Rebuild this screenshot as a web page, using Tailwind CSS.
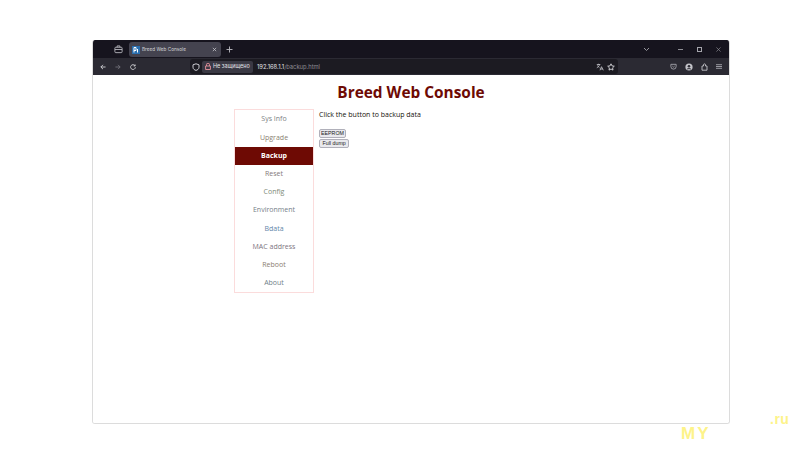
<!DOCTYPE html>
<html>
<head>
<meta charset="utf-8">
<script src="https://cdn.jsdelivr.net/npm/@tailwindcss/browser@4"></script>
</head>
<body class="bg-white w-[800px] h-[450px] overflow-hidden relative font-['Open_Sans',sans-serif]">
<div class="pt-10 pl-[92px]">
  <div class="w-[638px] h-[384px] rounded-[3px] border border-t-0 border-[#dcdcdc] overflow-hidden flex flex-col bg-white">
    <!-- tab strip -->
    <div class="h-[18px] bg-[#16141e] flex items-center text-[#d8d8dc] shrink-0 relative">
      <svg class="ml-[21px] w-[9px] h-[9px]" viewBox="0 0 10 10" fill="none" stroke="#b5b5bc" stroke-width="1"><rect x="1" y="2.5" width="8" height="6" rx="1"/><path d="M3.5 2.5V1h3v1.5M1 5h8"/></svg>
      <div class="ml-[6px] mt-[1px] w-[92px] h-[15px] bg-[#44434f] rounded-[3px] flex items-center pl-[3px] pr-[4px]">
        <svg class="w-[8px] h-[8px] shrink-0" viewBox="0 0 8 8"><rect width="8" height="8" fill="#2a6fb0"/><path d="M2 1.5v5M2 1.5h2v3H2M5.5 3v3.5" stroke="#fff" stroke-width="1" fill="none"/></svg>
        <span class="ml-[2px] text-[4.700px] leading-none font-['Inter',sans-serif] text-[#d5d5da] whitespace-nowrap">Breed Web Console</span>
        <svg class="ml-auto w-[5px] h-[5px]" viewBox="0 0 6 6" stroke="#c9c9cf" stroke-width=".9"><path d="M1 1l4 4M5 1L1 5"/></svg>
      </div>
      <svg class="ml-[5px] w-[7px] h-[7px]" viewBox="0 0 7 7" stroke="#bdbdc4" stroke-width=".9"><path d="M3.5 .5v6M.5 3.5h6"/></svg>
      <svg class="ml-[410px] w-[7px] h-[5px]" viewBox="0 0 7 5" fill="none" stroke="#a5a5ac" stroke-width=".9"><path d="M1 1l2.5 2.5L6 1"/></svg>
      <span class="ml-[28px] w-[5px] h-px bg-[#8f8f96]"></span>
      <span class="ml-[14px] w-[5px] h-[5px] border border-[#a5a5ac]"></span>
      <svg class="ml-[14px] w-[5px] h-[5px]" viewBox="0 0 6 6" stroke="#8f8f96" stroke-width=".8"><path d="M.5.5l5 5M5.5.5l-5 5"/></svg>
    </div>
    <!-- toolbar -->
    <div class="h-[17px] bg-[#2b2a33] flex items-center shrink-0">
      <svg class="ml-[7px] w-[6px] h-[6px] shrink-0" viewBox="0 0 7 7" fill="none" stroke="#d8d8dc" stroke-width="1"><path d="M6.5 3.5H1M3.5 1L1 3.5 3.5 6"/></svg>
      <svg class="ml-[9px] w-[6px] h-[6px] shrink-0" viewBox="0 0 7 7" fill="none" stroke="#75747c" stroke-width="1"><path d="M.5 3.500H6M3.500 1L6 3.500 3.500 6"/></svg>
      <svg class="ml-[9px] w-[6px] h-[6px] shrink-0" viewBox="0 0 7 7" fill="none" stroke="#d8d8dc" stroke-width="1"><path d="M5.800 2A2.800 2.800 0 1 0 6.300 3.800M6 .6V2.300H4.300"/></svg>
      <div class="ml-[54px] w-[428px] h-[15px] shrink-0 bg-[#1c1b22] rounded-[3px] flex items-center pl-[2px] pr-[3px]">
        <svg class="w-[8px] h-[8px] shrink-0" viewBox="0 0 8 8" fill="none" stroke="#c9c9cf" stroke-width="1"><path d="M4 .8l3 1v2.400C7 6 5.500 7 4 7.400 2.500 7 1 6 1 4.200V1.800z"/></svg>
        <div class="ml-[2px] h-[12px] w-[51px] bg-[#3a3944] rounded-[2px] flex items-center pl-[3px] shrink-0">
          <svg class="w-[6px] h-[7px] shrink-0" viewBox="0 0 6 7" fill="none" stroke="#e8929c" stroke-width=".9"><path d="M1.500 3V1.700a1.500 1.500 0 0 1 3 0V3M.6 3h4.800v3.500H.6z"/></svg>
          <span class="ml-[2px] text-[5.500px] leading-none font-['Inter',sans-serif] text-[#e2e2e6] whitespace-nowrap">Не защищено</span>
        </div>
        <span class="ml-[4px] text-[5.800px] leading-none font-['Inter',sans-serif] text-[#e2e2e6] whitespace-nowrap">192.168.1.1<span class="text-[#8e8d95]">/backup.html</span></span>
        <svg class="ml-auto w-[8px] h-[8px]" viewBox="0 0 8 8" fill="none" stroke="#c9c9cf" stroke-width=".8"><path d="M.8 1.500h3.500M2.500.8v.7M3.600 1.500C3.200 3 2 4.200.8 4.800M1.500 2.500c.5 1 1.200 1.700 2 2.200M4 7.300l1.500-3.600L7.300 7.300M4.600 6h2"/></svg>
        <svg class="ml-[3px] w-[8px] h-[8px]" viewBox="0 0 8 8" fill="none" stroke="#d8d8dc" stroke-width=".9"><path d="M4 .8l1 2.100 2.300.3-1.700 1.600.4 2.300L4 6l-2 1.100.4-2.300L.7 3.200 3 2.900z"/></svg>
      </div>
      <svg class="ml-[52px] w-[7px] h-[7px] shrink-0" viewBox="0 0 8 8" fill="none" stroke="#b5b5bc" stroke-width=".9"><path d="M1 1.500h6V4A3 3 0 0 1 1 4zM2.700 3.500L4 4.700l1.300-1.200"/></svg>
      <svg class="ml-[8px] w-[8px] h-[8px] shrink-0" viewBox="0 0 8 8"><circle cx="4" cy="4" r="3.600" fill="#c4c4ca"/><circle cx="4" cy="3.200" r="1.300" fill="#2b2a33"/><path d="M1.800 6.500C2.300 5.300 5.700 5.300 6.200 6.500" stroke="#2b2a33" fill="none"/></svg>
      <svg class="ml-[8px] w-[7px] h-[8px] shrink-0" viewBox="0 0 7 8" fill="none" stroke="#c4c4ca" stroke-width=".9"><path d="M1 7.200V3h1.500V1.700C2.500.6 4.500.6 4.500 1.700V3H6v4.200z"/></svg>
      <svg class="ml-[8px] w-[6px] h-[5px] shrink-0" viewBox="0 0 6 5" stroke="#b5b5bc" stroke-width=".8"><path d="M0 .7h6M0 2.500h6M0 4.300h6"/></svg>
    </div>
    <!-- page -->
    <div class="flex-1 bg-white font-['Open_Sans',sans-serif]">
      <h1 class="mt-[8px] text-center text-[15.400px] leading-[20px] font-bold text-[#6e0a04]">Breed Web Console</h1>
      <div class="mt-[6px] ml-[141px] flex items-start">
        <nav class="w-[80px] border border-[#fbdcdc] flex flex-col text-[7px] text-[#7c8184] pt-[.6px]">
          <a class="h-[18.200px] flex items-center justify-center">Sys Info</a>
          <a class="h-[18.200px] flex items-center justify-center text-[#8a7f72]">Upgrade</a>
          <a class="h-[18.200px] flex items-center justify-center bg-[#6e0a04] text-white font-bold">Backup</a>
          <a class="h-[18.200px] flex items-center justify-center text-[#85797a]">Reset</a>
          <a class="h-[18.200px] flex items-center justify-center text-[#7e8a78]">Config</a>
          <a class="h-[18.200px] flex items-center justify-center text-[#76808a]">Environment</a>
          <a class="h-[18.200px] flex items-center justify-center text-[#5f86a8]">Bdata</a>
          <a class="h-[18.200px] flex items-center justify-center text-[#7d7480]">MAC address</a>
          <a class="h-[18.200px] flex items-center justify-center text-[#8a7d70]">Reboot</a>
          <a class="h-[18.200px] flex items-center justify-center text-[#6f8088]">About</a>
        </nav>
        <div class="ml-[5px] pt-px flex flex-col items-start">
          <p class="text-[7px] leading-[10px] font-medium text-[#14110a]">Click the button to backup data</p>
          <button class="mt-[9px] h-[9px] px-[1px] bg-[#e9e9ed] border border-[#b0b0ba] rounded-[2px] text-[5.300px] leading-none text-[#222] font-['Liberation_Sans',sans-serif]">EEPROM</button>
          <button class="mt-[1px] h-[9px] px-[2.500px] bg-[#e9e9ed] border border-[#b0b0ba] rounded-[2px] text-[5.300px] leading-none text-[#222] font-['Liberation_Sans',sans-serif]">Full dump</button>
        </div>
      </div>
    </div>
  </div>
</div>
<span class="absolute left-[681px] top-[424px] text-[17px] leading-[20px] font-bold tracking-[2px] text-[#fdf38a] font-['Liberation_Sans',sans-serif]">MY</span>
<span class="absolute left-[770px] top-[412px] text-[14px] leading-[14px] font-bold tracking-[.5px] text-[#fdf38a] font-['Liberation_Sans',sans-serif]">.ru</span>
</body>
</html>
